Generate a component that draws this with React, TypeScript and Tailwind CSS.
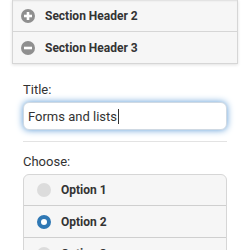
import React from "react";

function CircleIcon({ minus }: { minus?: boolean }) {
  return (
    <svg width="14" height="14" viewBox="0 0 14 14" className="shrink-0">
      <circle cx="7" cy="7" r="7" fill="#8f8f8f" />
      <rect x="3" y="5.7" width="8" height="2.6" fill="#fff" />
      {!minus && <rect x="5.7" y="3" width="2.6" height="8" fill="#fff" />}
    </svg>
  );
}

function Radio({ checked }: { checked?: boolean }) {
  return checked ? (
    <span className="block w-[14px] h-[14px] rounded-full bg-white border-[4px] border-[#2f78b4] shrink-0" />
  ) : (
    <span className="block w-[14px] h-[14px] rounded-full bg-[#dcdcdc] shrink-0" />
  );
}

export default function App() {
  return (
    <div
      className="w-[250px] h-[250px] overflow-hidden bg-white text-[#333]"
      style={{ fontFamily: "Roboto, 'Liberation Sans', sans-serif" }}
    >
      <div className="ml-[12px] w-[226px] border-x border-b border-[#d6d6d6] shadow-[0_1px_3px_rgba(0,0,0,0.12)] bg-[#f6f6f6]">
        <div className="h-[32px] flex items-center pl-[8px] gap-[10px] border-b border-[#d6d6d6] shadow-[inset_0_2px_2px_-1px_rgba(0,0,0,0.1)]">
          <CircleIcon />
          <span className="text-[12px] font-bold leading-none">Section Header 2</span>
        </div>
        <div className="h-[31px] flex items-center pl-[8px] gap-[10px]">
          <CircleIcon minus />
          <span className="text-[12px] font-bold leading-none">Section Header 3</span>
        </div>
      </div>

      <div className="ml-[23px] w-[204px]">
        <div className="mt-[18px] text-[13px] leading-[16px]">Title:</div>
        <div className="mt-[4px] h-[28px] rounded-[6px] border border-[#cfd9e3] bg-white shadow-[0_0_7px_#5b9ad6] flex items-center pl-[4px]">
          <span className="text-[13px] leading-none">Forms and lists</span>
          <span className="w-[1px] h-[15px] bg-[#333] ml-[1px]" />
        </div>
        <div className="mt-[11px] h-[1px] bg-[#e3e3e3]" />
        <div className="mt-[12px] text-[13px] leading-[16px]">Choose:</div>
        <div className="mt-[4px] rounded-[6px] border border-[#d6d6d6] overflow-hidden bg-[#f6f6f6]">
          <div className="h-[31px] flex items-center pl-[13px] gap-[10px] border-b border-[#cfcfcf]">
            <Radio />
            <span className="text-[12px] font-bold leading-none">Option 1</span>
          </div>
          <div className="h-[32px] flex items-center pl-[13px] gap-[10px] border-b border-[#cfcfcf]">
            <Radio checked />
            <span className="text-[12px] font-bold leading-none">Option 2</span>
          </div>
          <div className="h-[32px] flex items-center pl-[13px] gap-[10px]">
            <Radio />
            <span className="text-[12px] font-bold leading-none">Option 3</span>
          </div>
        </div>
      </div>
    </div>
  );
}
